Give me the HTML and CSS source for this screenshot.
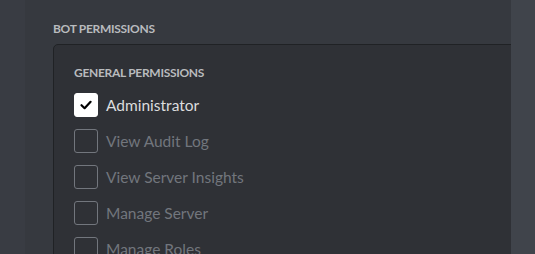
FILE: index.html
```html
<!DOCTYPE html>
<html lang="en">

<head>
    <meta charset="UTF-8">
    <title>Bot Permissions</title>
    <link rel="stylesheet" href="styles.css">
</head>

<body>
    <div class="side"></div>
    <main class="panel">
        <h5 class="title">Bot Permissions</h5>
        <section class="perm-box">
            <h6 class="group">General Permissions</h6>
            <label class="perm checked">
                <span class="box">
                    <svg width="14" height="14" viewBox="0 0 14 14"><path d="M2.5 7.2 L5.6 10.2 L11.6 3.8" fill="none" stroke="#000" stroke-width="2.2" stroke-linecap="round" stroke-linejoin="round"/></svg>
                </span>
                <span class="name">Administrator</span>
            </label>
            <label class="perm"><span class="box"></span><span class="name">View Audit Log</span></label>
            <label class="perm"><span class="box"></span><span class="name">View Server Insights</span></label>
            <label class="perm"><span class="box"></span><span class="name">Manage Server</span></label>
            <label class="perm"><span class="box"></span><span class="name">Manage Roles</span></label>
        </section>
    </main>
    <div class="scroll"></div>
</body>

</html>
```

FILE: styles.css
```css
body {
    margin: 0;
    height: 254px;
    display: flex;
    overflow: hidden;
    background-color: #393c43;
    font-family: Lato, "Noto Sans", sans-serif;
}

.side {
    width: 25px;
    flex-shrink: 0;
    background-color: #393c43;
}

.panel {
    flex: 1;
    overflow: hidden;
    background-color: #36393f;
    padding: 21px 0 0 28px;
}

.scroll {
    width: 24px;
    flex-shrink: 0;
    background-color: #40444b;
}

.title,
.group {
    margin: 0;
    font-size: 12px;
    line-height: 16px;
    font-weight: 700;
    text-transform: uppercase;
    color: #b9bbbe;
    letter-spacing: -0.3px;
}

.perm-box {
    width: 600px;
    height: 300px;
    margin-top: 7px;
    box-sizing: border-box;
    background-color: #2f3136;
    border: 1px solid #202225;
    border-radius: 5px;
    padding: 20px 0 0 20px;
}

.group {
    margin-bottom: 12px;
}

.perm {
    display: flex;
    align-items: center;
    height: 24px;
    margin-bottom: 12px;
}

.box {
    width: 24px;
    height: 24px;
    box-sizing: border-box;
    border: 1px solid #72767d;
    border-radius: 3px;
    display: flex;
    justify-content: center;
    align-items: center;
    flex-shrink: 0;
}

.checked .box {
    background-color: #fff;
    border-color: #fff;
}

.name {
    margin-left: 8px;
    font-size: 15.5px;
    color: #72767d;
}

.checked .name {
    color: #dcddde;
}
```
